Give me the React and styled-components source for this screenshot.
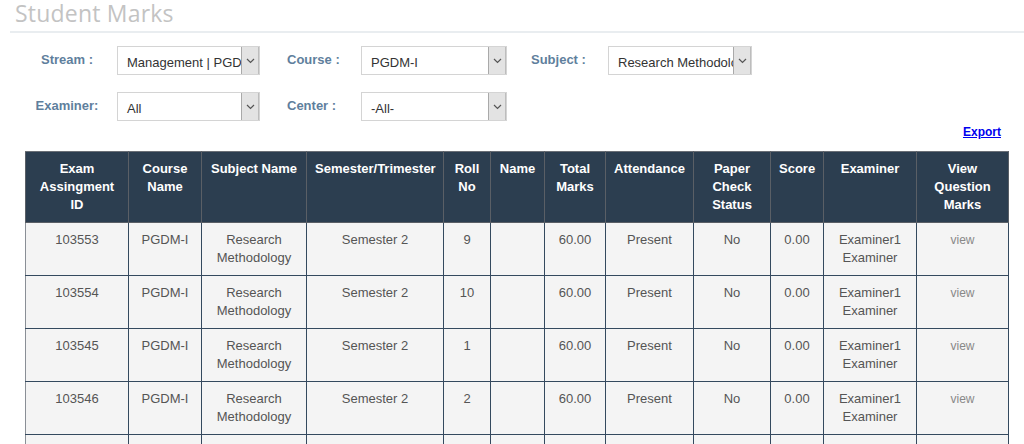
import React from 'react'
import styled, { createGlobalStyle } from 'styled-components'

const GlobalStyle = createGlobalStyle`
  html, body {
    margin: 0;
    padding: 0;
    overflow: hidden;
    background: #fff;
    font-family: "Liberation Sans", Arial, sans-serif;
  }
`

const Page = styled.div`
  width: 1024px;
`

const Title = styled.h2`
  margin: -5px 0 0 0;
  padding: 0 0 0 15px;
  font-family: "Open Sans", sans-serif;
  font-size: 23px;
  font-weight: 400;
  line-height: 36px;
  color: #c3c3c3;
  letter-spacing: 0.2px;
`

const Divider = styled.div`
  margin-left: 10px;
  height: 2px;
  background: #e9edf0;
`

const Filters = styled.div`
  display: grid;
  grid-template-columns: 92px 143px 101px 146px 101px 144px;
  row-gap: 17px;
  align-items: center;
  padding: 13px 0 0 25px;
  width: max-content;
`

const Label = styled.div`
  font-size: 13px;
  font-weight: bold;
  color: #5f7f9d;
  margin-top: -3px;
  text-align: ${p => (p.$center ? 'center' : 'left')};
  padding-left: ${p => p.$indent || 0}px;
  padding-right: ${p => (p.$center ? 8 : 0)}px;
`

const Select = styled.div`
  display: flex;
  height: 29px;
  box-sizing: border-box;
  border: 1px solid #d4d4d4;
  background: #fff;
  overflow: hidden;
`

const SelectText = styled.span`
  flex: 1;
  min-width: 0;
  padding: 0 0 0 9px;
  font-size: 13px;
  line-height: 29px;
  margin-top: 1px;
  color: #333;
  white-space: nowrap;
  overflow: hidden;
`

const Arrow = styled.span`
  flex: 0 0 16px;
  display: flex;
  align-items: center;
  justify-content: center;
  background: #e3e3e3;
  border-left: 1px solid #a9a9a9;
  border-right: 1px solid #bdbdbd;
`

const Toolbar = styled.div`
  display: flex;
  justify-content: flex-end;
  padding: 3px 23px 0 0;
  height: 23px;
`

const ExportLink = styled.a`
  font-size: 12px;
  font-weight: bold;
  color: #0000ee;
  text-decoration: underline;
  line-height: 16px;
  cursor: pointer;
`

const Table = styled.table`
  margin: 4px 0 0 25px;
  width: 983px;
  table-layout: fixed;
  border-collapse: collapse;
  border-left: 1px solid #8a8f96;
  font-size: 13px;
`

const HeadCell = styled.th`
  background: #2c3e50;
  color: #fff;
  font-weight: bold;
  font-size: 13px;
  line-height: 18px;
  vertical-align: top;
  text-align: center;
  padding: 8px 8px 8px;
  border: 1px solid #5a5f66;
  border-top-color: #6a6f76;
`

const Cell = styled.td`
  background: #f4f4f4;
  color: ${p => (p.$muted ? '#888' : '#555')};
  font-size: ${p => (p.$muted ? 12 : 13)}px;
  line-height: 18px;
  vertical-align: top;
  text-align: center;
  padding: 8px 4px 8px;
  border: 1px solid #34495e;
  border-left-color: ${p => (p.$first ? '#8a8f96' : '#34495e')};
`

const Chevron = () => (
  <svg width="9" height="6" viewBox="0 0 9 6">
    <path d="M1 1l3.5 3.5L8 1" fill="none" stroke="#555" strokeWidth="1.2" />
  </svg>
)

const Dropdown = ({ value }) => (
  <Select>
    <SelectText>{value}</SelectText>
    <Arrow>
      <Chevron />
    </Arrow>
  </Select>
)

const columns = [
  ['Exam Assingment ID', 103],
  ['Course Name', 73],
  ['Subject Name', 105],
  ['Semester/Trimester', 137],
  ['Roll No', 47],
  ['Name', 54],
  ['Total Marks', 61],
  ['Attendance', 88],
  ['Paper Check Status', 77],
  ['Score', 53],
  ['Examiner', 93],
  ['View Question Marks', 92],
]

const rows = [
  { id: '103553', roll: '9' },
  { id: '103554', roll: '10' },
  { id: '103545', roll: '1' },
  { id: '103546', roll: '2' },
  { id: '103547', roll: '3' },
]

const App = () => {
  return (
    <Page>
      <GlobalStyle />
      <Title>Student Marks</Title>
      <Divider />
      <Filters>
        <Label $center>Stream :</Label>
        <Dropdown value="Management | PGDM" />
        <Label $indent={27}>Course :</Label>
        <Dropdown value="PGDM-I" />
        <Label $indent={24}>Subject :</Label>
        <Dropdown value="Research Methodology" />
        <Label $center>Examiner:</Label>
        <Dropdown value="All" />
        <Label $indent={27}>Center :</Label>
        <Dropdown value="-All-" />
      </Filters>
      <Toolbar>
        <ExportLink>Export</ExportLink>
      </Toolbar>
      <Table>
        <colgroup>
          {columns.map(([name, w]) => (
            <col key={name} style={{ width: w }} />
          ))}
        </colgroup>
        <thead>
          <tr>
            {columns.map(([name]) => (
              <HeadCell key={name}>{name}</HeadCell>
            ))}
          </tr>
        </thead>
        <tbody>
          {rows.map(r => (
            <tr key={r.id}>
              <Cell $first>{r.id}</Cell>
              <Cell>PGDM-I</Cell>
              <Cell>
                Research
                <br />
                Methodology
              </Cell>
              <Cell>Semester 2</Cell>
              <Cell>{r.roll}</Cell>
              <Cell />
              <Cell>60.00</Cell>
              <Cell>Present</Cell>
              <Cell>No</Cell>
              <Cell>0.00</Cell>
              <Cell>
                Examiner1
                <br />
                Examiner
              </Cell>
              <Cell $muted>view</Cell>
            </tr>
          ))}
        </tbody>
      </Table>
    </Page>
  )
}

export default App
